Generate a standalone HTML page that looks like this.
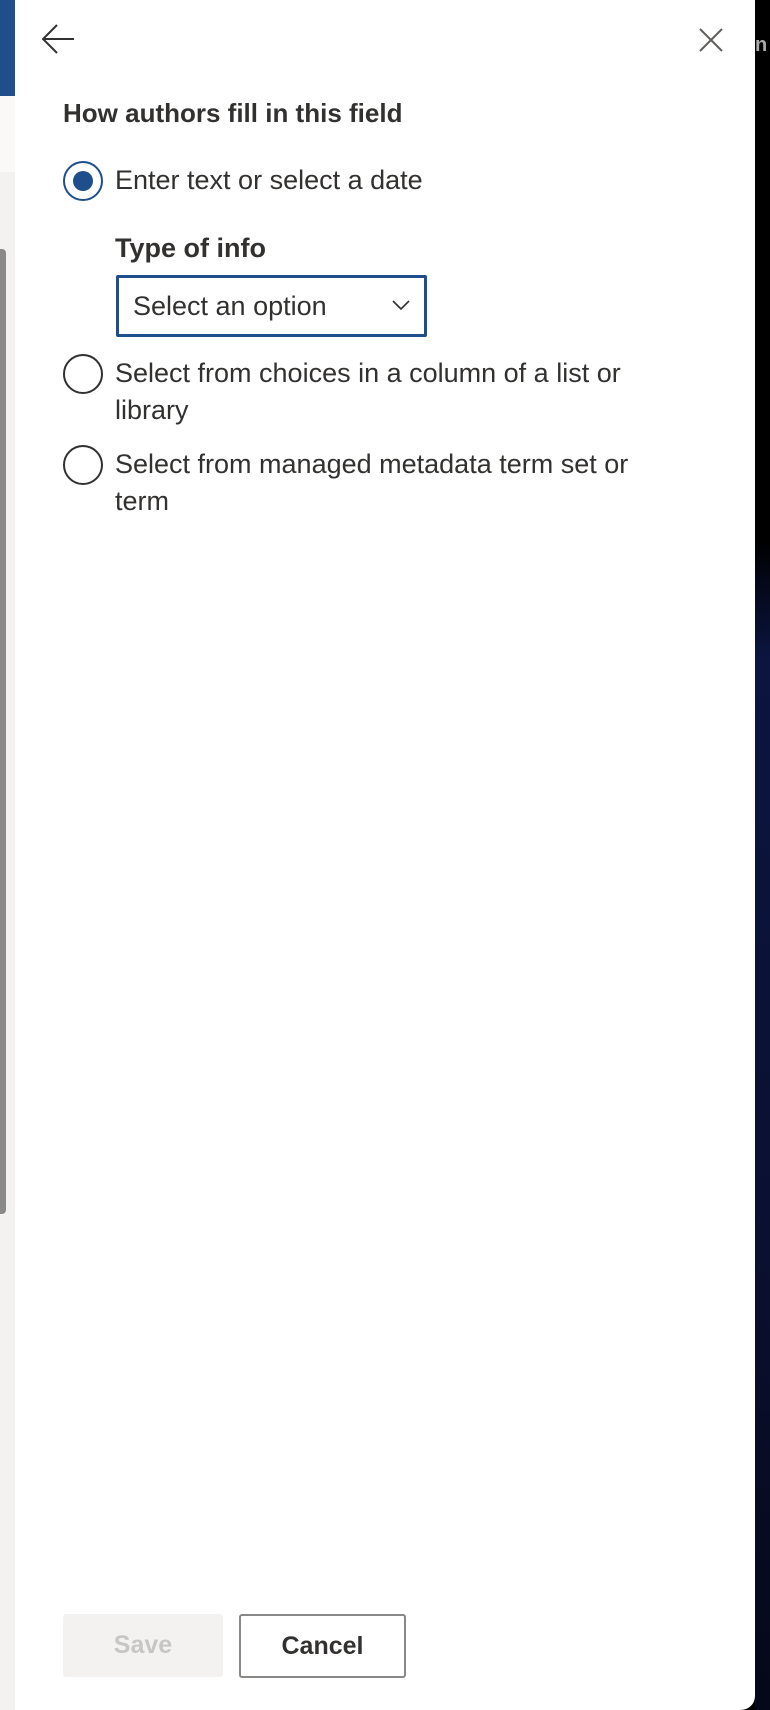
<!DOCTYPE html>
<html><head><meta charset="utf-8"><style>
*{margin:0;padding:0;box-sizing:border-box}
body{width:770px;height:1710px;background:#000;position:relative;overflow:hidden;font-family:"Liberation Sans",sans-serif;color:#323130}
.left{position:absolute;left:0;top:0;width:16px;height:1710px;background:#f3f2f1}
.blue{position:absolute;left:0;top:0;width:16px;height:96px;background:#1f4e8c}
.lg{position:absolute;left:0;top:96px;width:16px;height:76px;background:#faf9f8}
.sb{position:absolute;left:0;top:249px;width:6px;height:965px;background:#8a8a8a;border-radius:0 4px 4px 0}
.glow{position:absolute;left:755px;top:540px;width:15px;height:1170px;background:linear-gradient(#000,#0b1540 10%,#0a1030 60%,#050818)}
.panel{position:absolute;left:15px;top:0;width:740px;height:1710px;background:#fff;border-radius:0 0 14px 0}
.t{position:absolute;white-space:nowrap}
.radio{position:absolute;left:63px;width:40px;height:40px;border:2px solid #323130;border-radius:50%}
.sel{border-color:#1f4e8c}
.sel::after{content:"";position:absolute;left:8px;top:8px;width:20px;height:20px;border-radius:50%;background:#1f4e8c}
.lab{font-size:27px;left:115px;line-height:37px}
</style></head><body>
<div class="left"></div><div class="blue"></div><div class="lg"></div><div class="sb"></div>
<div class="glow"></div>
<div class="t" style="left:755px;top:34px;color:#aaa;font-size:20px;font-weight:bold">n</div>
<div class="panel"></div>
<svg style="position:absolute;left:42px;top:24px" width="34" height="30" viewBox="0 0 34 30"><path d="M1 15H32M15 1L1 15L15 29" fill="none" stroke="#323130" stroke-width="2"/></svg>
<svg style="position:absolute;left:699px;top:28px" width="24" height="24" viewBox="0 0 24 24"><path d="M1 1L23 23M23 1L1 23" fill="none" stroke="#605e5c" stroke-width="2"/></svg>
<div class="t" style="left:63px;top:97px;font-size:26px;font-weight:bold;line-height:32px">How authors fill in this field</div>
<div class="radio sel" style="top:161px"></div>
<div class="t lab" style="top:162px">Enter text or select a date</div>
<div class="t" style="left:115px;top:231px;font-size:27px;font-weight:bold;line-height:34px">Type of info</div>
<div style="position:absolute;left:116px;top:275px;width:311px;height:62px;border:3px solid #1f4e8c;border-radius:2px"></div>
<div class="t" style="left:133px;top:288px;font-size:27px;line-height:36px">Select an option</div>
<svg style="position:absolute;left:392px;top:300px" width="18" height="11" viewBox="0 0 18 11"><path d="M1 1L9 9L17 1" fill="none" stroke="#323130" stroke-width="1.6"/></svg>
<div class="radio" style="top:354px"></div>
<div class="t lab" style="top:355px">Select from choices in a column of a list or<br>library</div>
<div class="radio" style="top:445px"></div>
<div class="t lab" style="top:446px">Select from managed metadata term set or<br>term</div>
<div style="position:absolute;left:63px;top:1614px;width:160px;height:63px;background:#f3f2f1;border-radius:3px;color:#c8c6c4;font-size:25px;text-align:center;line-height:63px;font-weight:bold">Save</div>
<div style="position:absolute;left:239px;top:1614px;width:167px;height:64px;border:2px solid #8a8886;border-radius:3px;color:#323130;font-size:25px;text-align:center;line-height:60px;font-weight:bold">Cancel</div>
</body></html>
